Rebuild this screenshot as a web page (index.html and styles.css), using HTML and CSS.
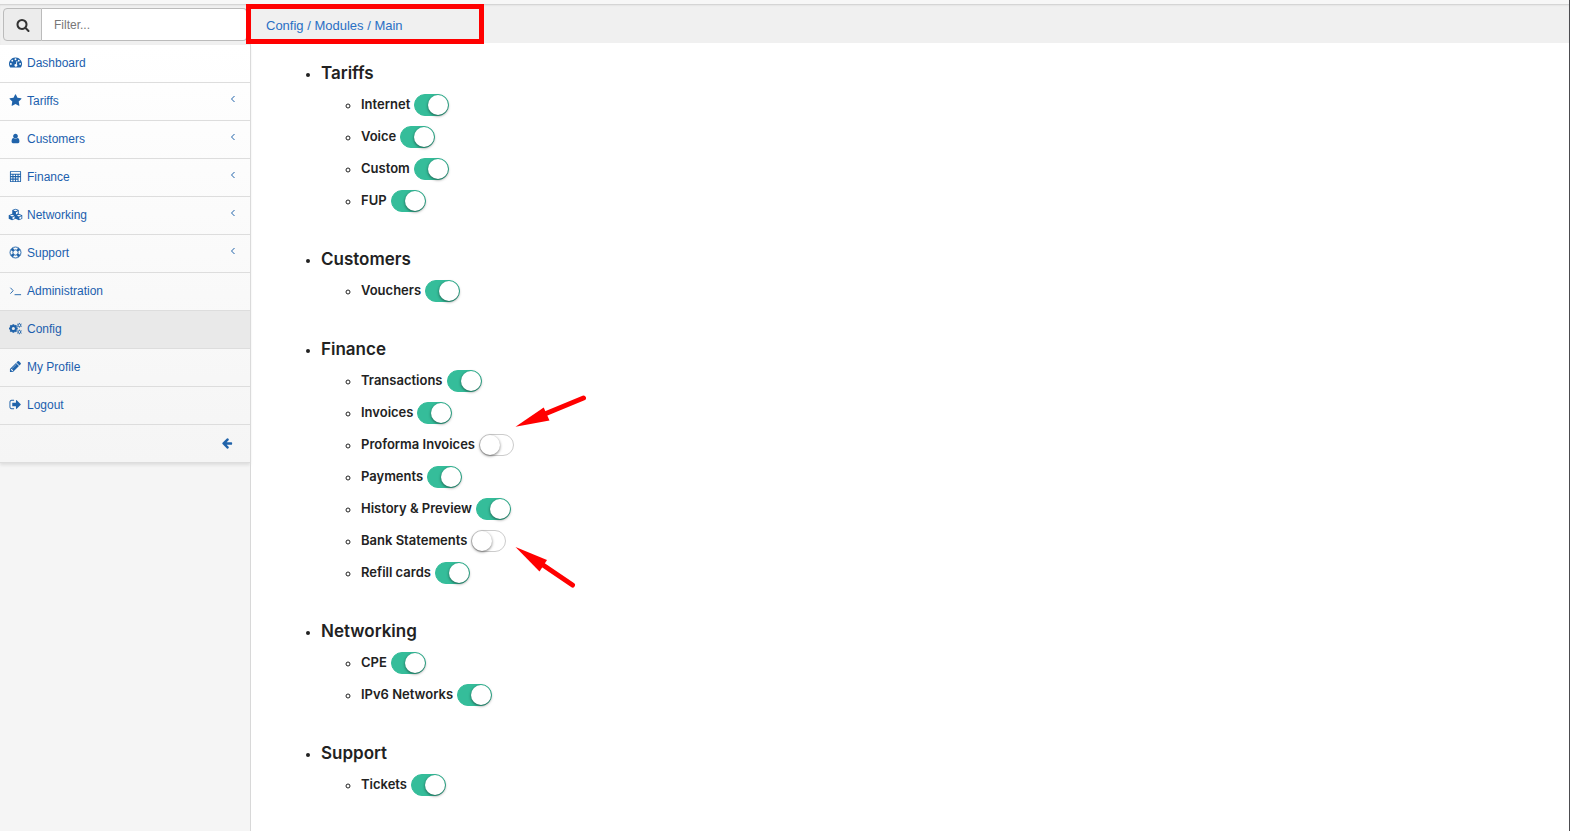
FILE: index.html
```html
<!DOCTYPE html>
<html lang="en">
<head>
<meta charset="utf-8">
<title>Config / Modules / Main</title>
<link rel="stylesheet" href="styles.css">
</head>
<body>
<div class="page">
  <div class="topstrip"></div>
  <div class="columns">
    <aside class="sidebar">
      <form class="filter">
        <button class="filter-button" type="button" aria-label="Search"><svg class="icon" viewBox="0 0 1792 1792"><path d="M1216 832q0-185-131.500-316.500t-316.500-131.500-316.500 131.500-131.500 316.500 131.500 316.500 316.500 131.500 316.500-131.500 131.500-316.500zm512 832q0 52-38 90t-90 38q-54 0-90-38l-343-342q-179 124-399 124-143 0-273.500-55.500t-225-150-150-225-55.500-273.500 55.500-273.500 150-225 225-150 273.500-55.500 273.500 55.500 225 150 150 225 55.500 273.500q0 220-124 399l343 343q37 37 37 90z"/></svg></button>
        <input class="filter-input" type="text" placeholder="Filter..." aria-label="Filter">
      </form>
      <nav class="nav">
        <a class="nav-item" href="#"><svg class="icon" viewBox="0 0 14 14"><path fill-rule="evenodd" d="M7 1.500a7 7 0 0 0-5.900 10.700q.2.300.5.300h10.800q.3 0 .5-.3A7 7 0 0 0 7 1.500zM2 7.500a1 1 0 1 0 0 2 1 1 0 0 0 0-2zm1.500-3.500a1 1 0 1 0 0 2 1 1 0 0 0 0-2zM7 2.500a1 1 0 1 0 0 2 1 1 0 0 0 0-2zm3.500 1.500a1 1 0 1 0 0 2 1 1 0 0 0 0-2zM12 7.500a1 1 0 1 0 0 2 1 1 0 0 0 0-2zM8.200 5.300l-.8 3.200a1.500 1.500 0 1 0 .9.300l.8-3.200z"/></svg><span>Dashboard</span></a>
        <a class="nav-item" href="#"><svg class="icon" viewBox="0 0 1792 1792"><path d="M1728 647q0 22-26 48l-363 354 86 500q1 7 1 20 0 21-10.500 35.500t-30.500 14.500q-19 0-40-12l-449-236-449 236q-22 12-40 12-21 0-31.500-14.500t-10.500-35.500q0-6 2-20l86-500-364-354q-25-27-25-48 0-37 56-46l502-73 225-455q19-41 49-41t49 41l225 455 502 73q56 9 56 46z"/></svg><span>Tariffs</span><svg class="chevron" viewBox="0 0 6 8"><path d="M4.500 1L1.500 4l3 3"/></svg></a>
        <a class="nav-item" href="#"><svg class="icon icon-small" viewBox="0 0 1792 1792"><path d="M1536 1399q0 109-62.500 187t-150.500 78h-854q-88 0-150.500-78t-62.500-187q0-85 8.500-160.500t31.500-152 58.500-131 94-89 134.500-34.500q131 128 313 128t313-128q76 0 134.500 34.500t94 89 58.500 131 31.500 152 8.500 160.500zm-256-887q0 159-112.500 271.500t-271.500 112.500-271.500-112.500-112.500-271.500 112.500-271.500 271.500-112.500 271.500 112.500 112.500 271.500z"/></svg><span>Customers</span><svg class="chevron" viewBox="0 0 6 8"><path d="M4.500 1L1.500 4l3 3"/></svg></a>
        <a class="nav-item" href="#"><svg class="icon" viewBox="0 0 14 14"><path fill-rule="evenodd" d="M2 1h10q1 0 1 1v10q0 1-1 1H2q-1 0-1-1V2q0-1 1-1zm0 1v2h10V2zm0 3v1.500h1.700V5zm2.800 0v1.500h1.700V5zm2.700 0v1.500h1.700V5zm2.800 0v1.500H12V5zM2 7.700v1.500h1.700V7.700zm2.800 0v1.500h1.700V7.700zm2.700 0v1.500h1.700V7.700zM2 10.400V12h1.700v-1.600zm2.800 0V12h1.700v-1.600zm2.700 0V12h1.700v-1.600zm2.800-2.700V12H12V7.700z"/></svg><span>Finance</span><svg class="chevron" viewBox="0 0 6 8"><path d="M4.500 1L1.500 4l3 3"/></svg></a>
        <a class="nav-item" href="#"><svg class="icon icon-wide" viewBox="0 0 16 14"><path fill-rule="evenodd" d="M8 .8l3.500 1.400v3.900L15.300 7.700v3.800L11.700 13.200 8 11.500 4.300 13.200.7 11.500V7.700L4.500 6.100V2.200zM8 1.700L5.700 2.600 8 3.600l2.300-1zM8.500 4.500v2.400l2-.9V3.600zM4.300 7.200L2 8.100l2.300 1 2.300-1zM4.800 10v2.200l2.200-1V9zM11.700 7.200l-2.300.9 2.300 1 2.300-1zM12.200 10v2.200l2.200-1V9z"/></svg><span>Networking</span><svg class="chevron" viewBox="0 0 6 8"><path d="M4.500 1L1.500 4l3 3"/></svg></a>
        <a class="nav-item" href="#"><svg class="icon" viewBox="0 0 14 14"><g class="ring"><circle cx="7" cy="7" r="5.900"/><circle cx="7" cy="7" r="2.900"/></g><path d="M4.200 1.500L5.800 4.500 4.500 5.800 1.500 4.200zM9.800 1.500L8.200 4.500 9.500 5.800l3-1.600zM4.200 12.500l1.600-3-1.300-1.300-3 1.600zM9.800 12.500l-1.600-3 1.300-1.300 3 1.600z"/></svg><span>Support</span><svg class="chevron" viewBox="0 0 6 8"><path d="M4.500 1L1.500 4l3 3"/></svg></a>
        <a class="nav-item" href="#"><svg class="icon" viewBox="0 0 14 14"><path class="line" d="M1.500 4l3 3.200-3 3.200M6 11.500h7"/></svg><span>Administration</span></a>
        <a class="nav-item active" href="#"><svg class="icon" viewBox="0 0 14 14"><g class="gear"><circle class="big" cx="4.700" cy="7" r="2.700"/><path class="spokes" d="M4.700 2.300v1.900M4.700 9.800v1.900M0 7h1.900M7.500 7h1.900M1.400 3.700l1.300 1.300M6.700 9l1.300 1.300M1.400 10.300L2.700 9M6.700 5L8 3.700"/><circle cx="11.200" cy="3.500" r="1.500"/><path d="M11.200 1v1M11.200 5v1M8.900 2.200l1 .6M12.500 4.300l1 .6M8.900 4.900l1-.6M12.500 2.800l1-.6"/><circle cx="11.200" cy="10.700" r="1.500"/><path d="M11.200 8.200v1M11.200 12.200v1M8.900 9.400l1 .6M12.500 11.500l1 .6M8.900 12.100l1-.6M12.500 10l1-.6"/></g></svg><span>Config</span></a>
        <a class="nav-item" href="#"><svg class="icon" viewBox="0 0 1792 1792"><path d="M491 1536l91-91-235-235-91 91v107h128v128h107zm523-928q0-22-22-22-10 0-17 7l-542 542q-7 7-7 17 0 22 22 22 10 0 17-7l542-542q7-7 7-17zm-54-192l416 416-832 832h-416v-416zm683 96q0 53-37 90l-166 166-416-416 166-165q36-38 90-38 53 0 91 38l235 234q37 39 37 91z"/></svg><span>My Profile</span></a>
        <a class="nav-item" href="#"><svg class="icon" viewBox="0 0 1792 1792"><path d="M704 1440q0 4 1 20t.5 26.500-3 23.500-10 19.500-20.500 6.500h-320q-119 0-203.500-84.500t-84.500-203.500v-704q0-119 84.500-203.500t203.500-84.500h320q13 0 22.500 9.500t9.500 22.500q0 4 1 20t.5 26.500-3 23.500-10 19.500-20.500 6.500h-320q-66 0-113 47t-47 113v704q0 66 47 113t113 47h312l11.500 1 11.500 3 8 5.500 7 9 2 13.500zm928-544q0 26-19 45l-544 544q-19 19-45 19t-45-19-19-45v-288h-448q-26 0-45-19t-19-45v-384q0-26 19-45t45-19h448v-288q0-26 19-45t45-19 45 19l544 544q19 19 19 45z"/></svg><span>Logout</span></a>
        <button class="nav-item collapse" type="button" aria-label="Collapse menu"><svg class="icon" viewBox="0 0 1792 1792"><path d="M1664 896v128q0 53-32.500 90.500t-84.500 37.500h-704l293 294q38 36 38 90t-38 90l-75 76q-37 37-90 37-52 0-91-37l-651-652q-37-37-37-90 0-52 37-91l651-650q38-38 91-38 52 0 90 38l75 74q38 38 38 91t-38 91l-293 293h704q52 0 84.500 37.500t32.500 90.500z"/></svg></button>
      </nav>
    </aside>
    <main class="main">
      <div class="breadcrumb"><a href="#">Config / Modules / Main</a></div>
      <ul class="groups">
        <li><h2>Tariffs</h2>
          <ul class="modules">
            <li><label>Internet <input class="switch" type="checkbox" checked></label></li>
            <li><label>Voice <input class="switch" type="checkbox" checked></label></li>
            <li><label>Custom <input class="switch" type="checkbox" checked></label></li>
            <li><label>FUP <input class="switch" type="checkbox" checked></label></li>
          </ul>
        </li>
        <li><h2>Customers</h2>
          <ul class="modules">
            <li><label>Vouchers <input class="switch" type="checkbox" checked></label></li>
          </ul>
        </li>
        <li><h2>Finance</h2>
          <ul class="modules">
            <li><label>Transactions <input class="switch" type="checkbox" checked></label></li>
            <li><label>Invoices <input class="switch" type="checkbox" checked></label></li>
            <li><label>Proforma Invoices <input class="switch" type="checkbox"></label></li>
            <li><label>Payments <input class="switch" type="checkbox" checked></label></li>
            <li><label>History &amp; Preview <input class="switch" type="checkbox" checked></label></li>
            <li><label>Bank Statements <input class="switch" type="checkbox"></label></li>
            <li><label>Refill cards <input class="switch" type="checkbox" checked></label></li>
          </ul>
        </li>
        <li><h2>Networking</h2>
          <ul class="modules">
            <li><label>CPE <input class="switch" type="checkbox" checked></label></li>
            <li><label>IPv6 Networks <input class="switch" type="checkbox" checked></label></li>
          </ul>
        </li>
        <li><h2>Support</h2>
          <ul class="modules">
            <li><label>Tickets <input class="switch" type="checkbox" checked></label></li>
          </ul>
        </li>
      </ul>
    </main>
  </div>
  <div class="callout-frame"></div>
  <svg class="callout-arrow upper" width="76" height="36" viewBox="512 394 76 36"><path d="M583.500 398L546 413.500"/><polygon points="515.500,426.700 543.700,407.500 549.500,420.500"/></svg>
  <svg class="callout-arrow lower" width="64" height="46" viewBox="512 544 64 46"><path d="M572.500 585L543 565"/><polygon points="515.500,547 547,560 539.500,571.500"/></svg>
</div>
</body>
</html>
```
FILE: styles.css
```css
* { box-sizing: border-box; }
body {
  margin: 0;
  background: #fff;
  color: #222;
  font: 12px/20px "Liberation Sans", Arial, sans-serif;
}
.page {
  position: relative;
  display: flex;
  flex-direction: column;
  min-height: 100vh;
  border-right: 1px solid #4c4c50;
}
.topstrip {
  height: 4px;
  background: #f7f7f7;
}
.columns {
  display: flex;
  flex: 1;
}
.sidebar {
  width: 251px;
  background: #f5f5f5;
  border-right: 1px solid #d8d8d8;
}
.filter {
  display: flex;
  height: 41px;
  padding: 4px 3px;
  background: #f0f0f0;
  box-shadow: inset 0 2px 2px -1px #ccc;
}
.filter-button {
  display: flex;
  align-items: center;
  justify-content: center;
  width: 39px;
  padding: 0;
  background: #ececec;
  border: 1px solid #bbb;
  border-radius: 4px 0 0 4px;
}
.filter-button .icon {
  width: 14px;
  height: 14px;
  margin: 0;
  fill: #333;
}
.filter-input {
  flex: 1;
  min-width: 0;
  padding: 0 12px;
  border: 1px solid #bbb;
  border-left: 0;
  border-radius: 0 4px 4px 0;
  background: #fff;
  font: inherit;
}
.filter-input::placeholder { color: #777; }
.nav {
  display: flex;
  flex-direction: column;
  background: linear-gradient(#fff, #f5f5f5);
  box-shadow: 0 2px 3px #ddd;
}
.nav-item {
  display: flex;
  align-items: center;
  height: 38px;
  padding: 0 14px 2px 9px;
  border: 0;
  border-bottom: 1px solid #ddd;
  background: none;
  color: #1c5fae;
  text-decoration: none;
}
.nav-item.active { background: #e9e9e9; }
.icon {
  width: 13px;
  height: 13px;
  margin-right: 5px;
  fill: #2063aa;
}
.icon-small {
  width: 11px;
  height: 11px;
  margin-left: 1px;
  margin-right: 6px;
}
.icon-wide {
  width: 15px;
  margin-left: -1px;
  margin-right: 4px;
}
.line, .chevron path {
  fill: none;
  stroke: #2063aa;
  stroke-width: 1;
}
.chevron {
  width: 6px;
  height: 8px;
  margin: 0 0 3px auto;
}
.ring, .gear {
  fill: none;
  stroke: #2063aa;
  stroke-width: 1;
}
.gear .big, .gear .spokes { stroke-width: 2; }
.collapse {
  justify-content: flex-end;
  padding-right: 17px;
}
.collapse .icon {
  width: 12px;
  height: 12px;
  margin: 0;
}
.main { flex: 1; }
.breadcrumb {
  height: 39px;
  padding: 12px 15px 0;
  background: #f0f0f0;
  box-shadow: inset 0 2px 2px -1px #ccc;
  font-size: 13px;
}
.breadcrumb a {
  color: #2a6fc4;
  text-decoration: none;
}
.groups {
  margin: 0;
  padding: 14px 0 0 70px;
  font: 600 13px/32px Inter, "Liberation Sans", sans-serif;
}
.groups > li { margin-bottom: 26px; }
.groups h2 {
  margin: 0;
  font-size: 17px;
  font-weight: 600;
  line-height: 32px;
}
.modules {
  margin: 0;
  padding: 0 0 0 40px;
}
.modules li { height: 32px; }
.modules label {
  display: inline-flex;
  align-items: center;
  gap: 4px;
  line-height: 30px;
  vertical-align: top;
}
.switch {
  appearance: none;
  display: flex;
  width: 35px;
  height: 22px;
  margin: 2px 0 0;
  border: 1px solid #ccc;
  border-radius: 11px;
  background: #fff;
}
.switch::before {
  content: "";
  width: 20px;
  height: 20px;
  border-radius: 50%;
  background: #fff;
  box-shadow: 0 1px 3px #0008;
}
.switch:checked {
  justify-content: flex-end;
  border-color: #35bd9a;
  background: #35bd9a;
}
.callout-frame {
  position: absolute;
  left: 246px;
  top: 4px;
  width: 238px;
  height: 40px;
  border: 5px solid #f00;
  pointer-events: none;
}
.callout-arrow {
  position: absolute;
  left: 512px;
  fill: #f00;
  pointer-events: none;
}
.callout-arrow path {
  stroke: #f00;
  stroke-width: 5;
  stroke-linecap: round;
}
.upper { top: 394px; }
.lower { top: 544px; }
```
